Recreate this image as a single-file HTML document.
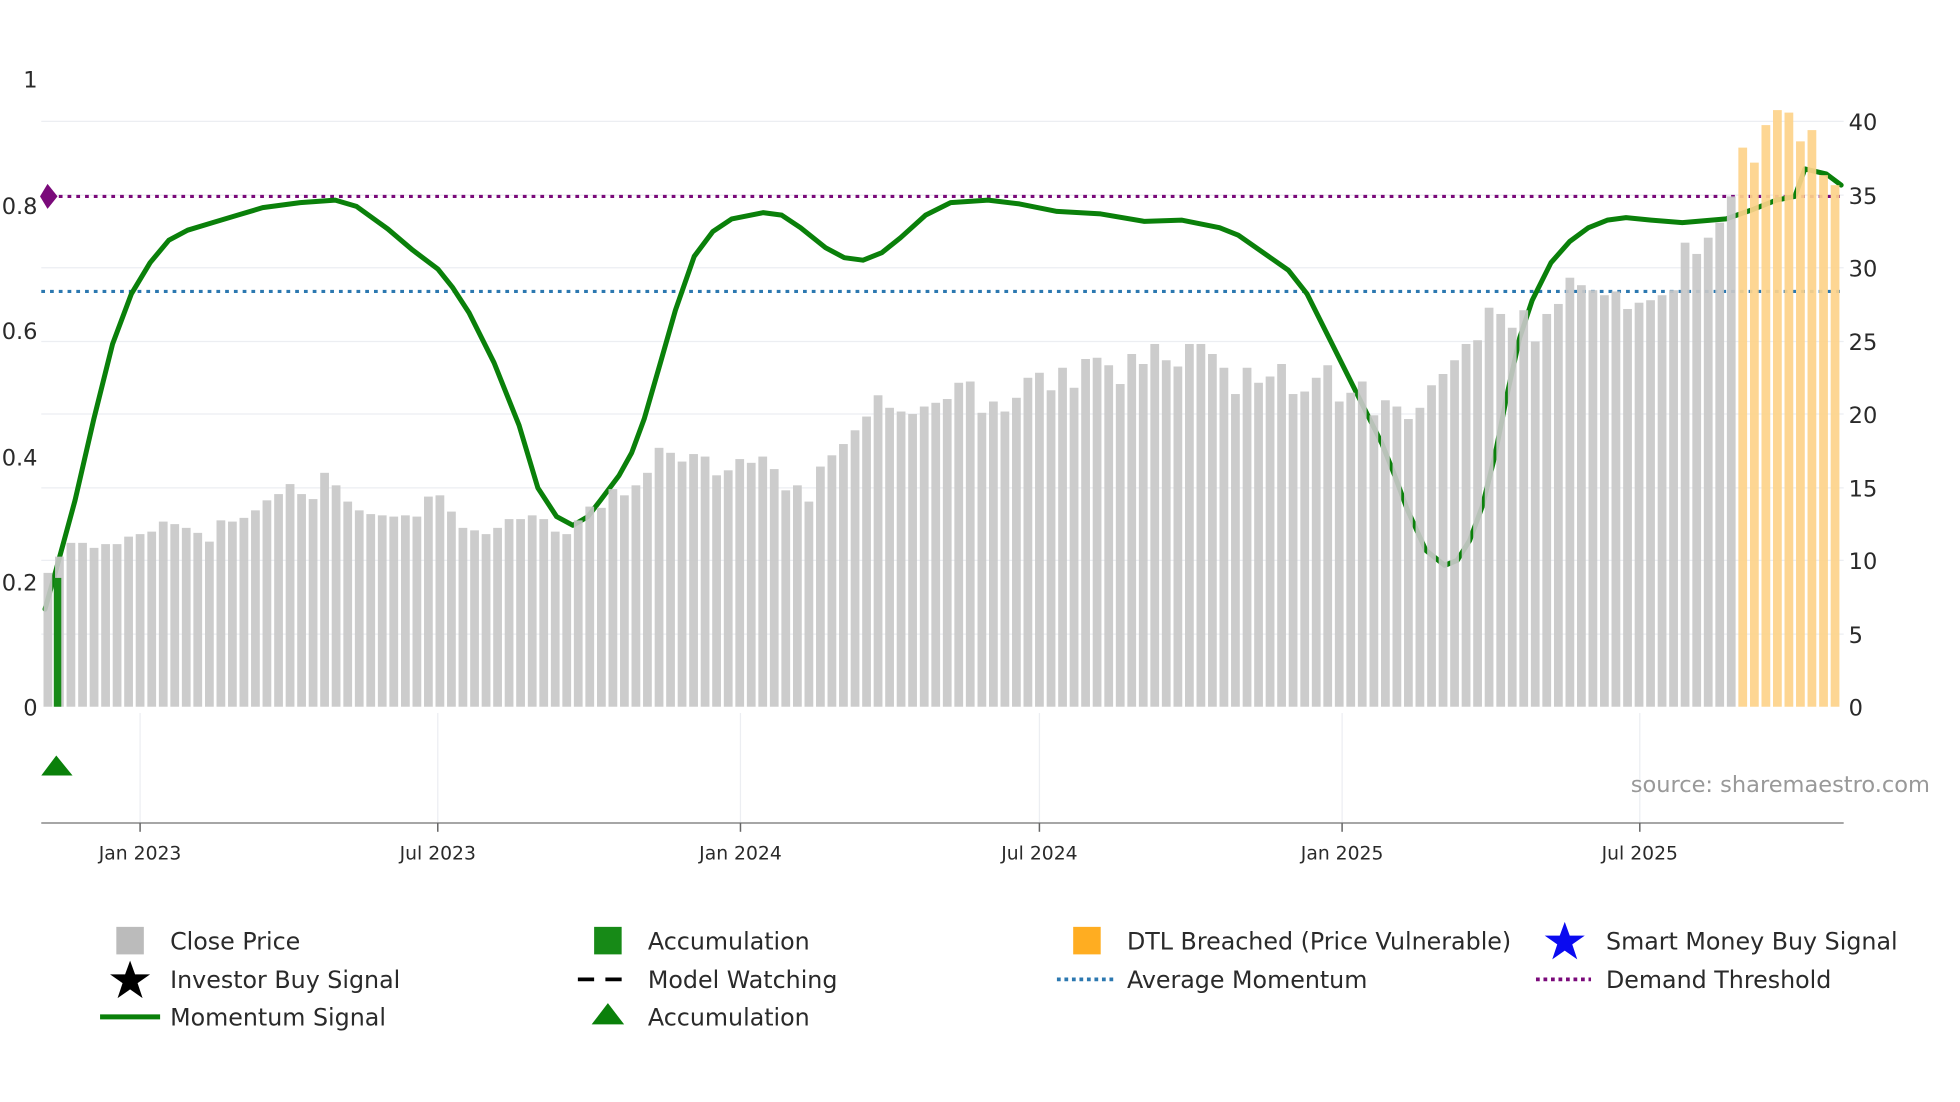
<!DOCTYPE html>
<html><head><meta charset="utf-8"><style>
html,body{margin:0;padding:0;background:#fff;width:1960px;height:1102px;overflow:hidden}
svg{display:block}
text{font-family:"DejaVu Sans","Liberation Sans",sans-serif;fill:#2a2a2a}
</style></head><body>
<svg id="s" width="1960" height="1102" viewBox="0 0 1567 881" xmlns="http://www.w3.org/2000/svg">
<g stroke="#eceef2" stroke-width="1">
<line x1="33" x2="1474" y1="97" y2="97"/><line x1="33" x2="1474" y1="156" y2="156"/><line x1="33" x2="1474" y1="214" y2="214"/><line x1="33" x2="1474" y1="273" y2="273"/><line x1="33" x2="1474" y1="331" y2="331"/><line x1="33" x2="1474" y1="390" y2="390"/><line x1="33" x2="1474" y1="448" y2="448"/><line x1="33" x2="1474" y1="507" y2="507"/>
<line x1="112" x2="112" y1="570" y2="658"/><line x1="350" x2="350" y1="570" y2="658"/><line x1="592" x2="592" y1="570" y2="658"/><line x1="831" x2="831" y1="570" y2="658"/><line x1="1073" x2="1073" y1="570" y2="658"/><line x1="1311" x2="1311" y1="570" y2="658"/>
</g>
<line x1="33" x2="1474" y1="157" y2="157" stroke="#7a0a7a" stroke-width="2.5" stroke-dasharray="3,4"/>
<line x1="33" x2="1474" y1="233" y2="233" stroke="#2c78b0" stroke-width="2.5" stroke-dasharray="3,4"/>
<polyline fill="none" stroke="#0a800a" stroke-width="4" stroke-linejoin="round" stroke-linecap="round" points="36,487 45,455 60,400 75,335 90,275 105,235 120,210 135,192 150,184 170,178 190,172 210,166 240,162 268,160 285,165 310,183 330,200 350,215 362,230 375,250 395,290 415,340 430,390 445,413 458,420 470,413 480,400 495,380 505,362 515,335 528,290 540,248 555,205 570,185 585,175 610,170 625,172 640,182 660,198 675,206 690,208 705,202 720,190 740,172 760,162 790,160 815,163 845,169 880,171 915,177 945,176 975,182 990,188 1010,202 1030,216 1045,235 1060,265 1075,295 1090,325 1105,355 1115,380 1125,407 1140,440 1155,452 1165,448 1175,432 1185,405 1195,365 1205,315 1215,270 1225,240 1240,210 1255,193 1270,182 1285,176 1300,174 1320,176 1345,178 1380,175 1400,168 1420,160 1435,157 1443,135 1460,139 1472,148"/>
<g id="bars"></g>
<rect x="43" y="462" width="6" height="103" fill="#178a17"/>
<polygon points="38,147 46,157 38,167 32,157" fill="#7a0a7a"/>
<polygon points="33,620 45,604 58,620" fill="#0a800a"/>
<line x1="33" x2="1474" y1="658" y2="658" stroke="#888" stroke-width="1.2"/>
<g stroke="#666" stroke-width="1.2"><line x1="112" x2="112" y1="658" y2="665"/><line x1="350" x2="350" y1="658" y2="665"/><line x1="592" x2="592" y1="658" y2="665"/><line x1="831" x2="831" y1="658" y2="665"/><line x1="1073" x2="1073" y1="658" y2="665"/><line x1="1311" x2="1311" y1="658" y2="665"/></g>
<g font-size="15" text-anchor="middle"><text x="112" y="687">Jan 2023</text><text x="350" y="687">Jul 2023</text><text x="592" y="687">Jan 2024</text><text x="831" y="687">Jul 2024</text><text x="1073" y="687">Jan 2025</text><text x="1311" y="687">Jul 2025</text></g>
<g font-size="18" text-anchor="end"><text x="30" y="70">1</text><text x="30" y="171">0.8</text><text x="30" y="271">0.6</text><text x="30" y="372">0.4</text><text x="30" y="472">0.2</text><text x="30" y="572">0</text></g>
<g font-size="18"><text x="1478" y="104">40</text><text x="1478" y="163">35</text><text x="1478" y="221">30</text><text x="1478" y="280">25</text><text x="1478" y="338">20</text><text x="1478" y="397">15</text><text x="1478" y="455">10</text><text x="1478" y="514">5</text><text x="1478" y="572">0</text></g>
<text x="1543" y="633" font-size="18" text-anchor="end" style="fill:#999">source: sharemaestro.com</text>
<g font-size="19">
<rect x="93" y="741" width="22" height="22" fill="#bbb"/><text x="136" y="759">Close Price</text>
<rect x="475" y="741" width="22" height="22" fill="#178a17"/><text x="518" y="759">Accumulation</text>
<rect x="858" y="741" width="22" height="22" fill="#ffad21"/><text x="901" y="759">DTL Breached (Price Vulnerable)</text>
<polygon points="1251,737 1255,748 1267,748 1257,755 1261,767 1251,760 1241,767 1245,755 1235,748 1247,748" fill="#0a0af0"/><text x="1284" y="759">Smart Money Buy Signal</text>
<polygon points="104,768 108,779 120,779 110,786 114,798 104,791 94,798 98,786 88,779 100,779" fill="#000"/><text x="136" y="790">Investor Buy Signal</text>
<line x1="462" x2="506" y1="783" y2="783" stroke="#000" stroke-width="3" stroke-dasharray="13,9"/><text x="518" y="790">Model Watching</text>
<line x1="845" x2="890" y1="783" y2="783" stroke="#2c78b0" stroke-width="3" stroke-dasharray="3,3"/><text x="901" y="790">Average Momentum</text>
<line x1="1228" x2="1272" y1="783" y2="783" stroke="#7a0a7a" stroke-width="3" stroke-dasharray="3,3"/><text x="1284" y="790">Demand Threshold</text>
<line x1="80" x2="128" y1="813" y2="813" stroke="#0a800a" stroke-width="4"/><text x="136" y="820">Momentum Signal</text>
<polygon points="473,819 486,802 499,819" fill="#0a800a"/><text x="518" y="820">Accumulation</text>
</g>
</svg>
<script>
var tops=[458,445,434,434,438,435,435,429,427,425,417,419,422,426,433,416,417,414,408,400,395,387,395,399,378,388,401,408,411,412,413,412,413,397,396,409,422,424,427,422,415,415,412,415,425,427,416,405,406,391,396,388,378,358,362,369,363,365,380,376,367,370,365,375,392,388,401,373,364,355,344,333,316,326,329,331,325,322,319,306,305,330,321,329,318,302,298,312,294,310,287,286,292,307,283,291,275,288,293,275,275,283,294,315,294,306,301,291,315,313,302,292,321,314,305,332,320,325,335,326,308,299,288,275,272,246,251,262,248,273,251,243,222,228,232,236,233,247,242,240,236,232,194,203,190,178,157,118,130,100,88,90,113,104,140,148];
var g=document.getElementById('bars'),n=tops.length,x0=34,x1=1472,st=(x1-x0)/n,h='';
for(var i=0;i<n;i++){var x=x0+i*st;var c=i>=n-9?'#fdd28a':'#c8c8c8';h+='<rect x="'+(x+0.8).toFixed(1)+'" y="'+tops[i]+'" width="'+(st-2.2).toFixed(1)+'" height="'+(565-tops[i])+'" fill="'+c+'" fill-opacity="0.92"/>';}
g.innerHTML=h;
</script>
</body></html>
